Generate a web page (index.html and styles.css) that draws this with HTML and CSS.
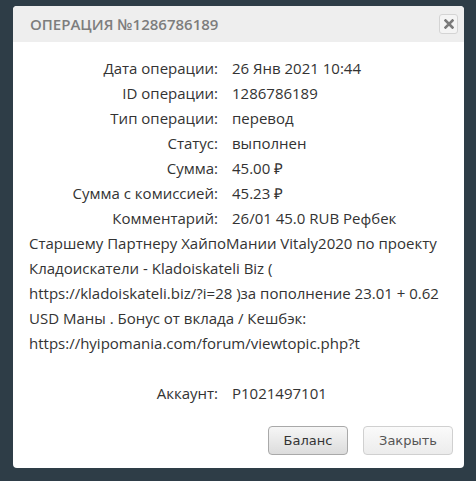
FILE: index.html
```html
<!DOCTYPE html>
<html lang="ru">
<head>
<meta charset="utf-8">
<title>Операция</title>
<link rel="stylesheet" href="styles.css">
</head>
<body>
<div class="modal">
  <div class="modal-header">
    <h1 class="modal-title">Операция №1286786189</h1>
    <button class="close-btn" type="button" aria-label="Закрыть">
      <svg width="10" height="10" viewBox="0 0 10 10"><path d="M1.5 1.5 L8.5 8.5 M8.5 1.5 L1.5 8.5" stroke="#7a7a7a" stroke-width="2.6" stroke-linecap="square"/></svg>
    </button>
  </div>
  <div class="modal-body">
    <dl class="info">
      <dt>Дата операции:</dt><dd>26 Янв 2021 10:44</dd>
      <dt>ID операции:</dt><dd>1286786189</dd>
      <dt>Тип операции:</dt><dd>перевод</dd>
      <dt>Статус:</dt><dd>выполнен</dd>
      <dt>Сумма:</dt><dd>45.00 ₽</dd>
      <dt>Сумма с комиссией:</dt><dd>45.23 ₽</dd>
    </dl>
    <p class="comment"><span class="comment-label">Комментарий:</span>26/01 45.0 RUB Рефбек Старшему Партнеру ХайпоМании Vitaly2020 по проекту Кладоискатели - Kladoiskateli Biz ( <span class="url">https://kladoiskateli.biz/?i=28</span> )за пополнение 23.01 + 0.62 USD Маны . Бонус от вклада / Кешбэк: <span class="url">https://hyipomania.com/forum/viewtopic.php?t</span></p>
    <dl class="info account">
      <dt>Аккаунт:</dt><dd>P1021497101</dd>
    </dl>
  </div>
  <div class="modal-footer">
    <button class="btn btn-primary" type="button">Баланс</button>
    <button class="btn btn-muted" type="button">Закрыть</button>
  </div>
</div>
</body>
</html>
```

FILE: styles.css
```css
* { box-sizing: border-box; }
html, body { margin: 0; }
body {
  background: #2e3d47;
  padding: 6px 12px 0 13px;
  height: 481px;
  overflow: hidden;
  font-family: "Open Sans", sans-serif;
}
.modal {
  width: 451px;
  height: 462px;
  background: #fff;
  border-radius: 4px;
  overflow: hidden;
  display: flex;
  flex-direction: column;
}
.modal-header {
  height: 36px;
  background: #eeeeee;
  display: flex;
  align-items: center;
  justify-content: space-between;
  padding: 0 6px 0 17px;
}
.modal-title {
  margin: 0;
  font-size: 15px;
  font-weight: 600;
  letter-spacing: 0;
  text-transform: uppercase;
  color: #7d7d7d;
}
.close-btn {
  width: 19px;
  height: 20px;
  padding: 0;
  border: 1px solid #d4d4d4;
  border-radius: 3px;
  background: #f4f4f4;
  display: flex;
  align-items: center;
  justify-content: center;
}
.modal-body {
  padding: 14px 17px 0 16px;
  font-size: 15px;
  line-height: 25px;
  color: #333;
}
.info {
  margin: 0;
  display: grid;
  grid-template-columns: 189px 1fr;
  column-gap: 14px;
}
.info dt { text-align: right; color: #333; }
.info dd { margin: 0; color: #333; }
.comment { margin: 0 0 25px; }
.comment-label {
  display: inline-block;
  width: 189px;
  margin-right: 14px;
  text-align: right;
}
.url { white-space: nowrap; }
.modal-footer {
  display: flex;
  justify-content: flex-end;
  gap: 15px;
  padding: 20px 11px 0 0;
}
.btn {
  height: 29px;
  border: 1px solid #a9a9a9;
  border-radius: 4px;
  font-family: "DejaVu Sans", sans-serif;
  font-size: 13px;
  color: #333;
  background: linear-gradient(#f6f6f6, #dcdcdc);
}
.btn-primary { width: 80px; }
.btn-muted {
  width: 90px;
  border-color: #d0d0d0;
  color: #555;
  background: linear-gradient(#fafafa, #ececec);
}
```
